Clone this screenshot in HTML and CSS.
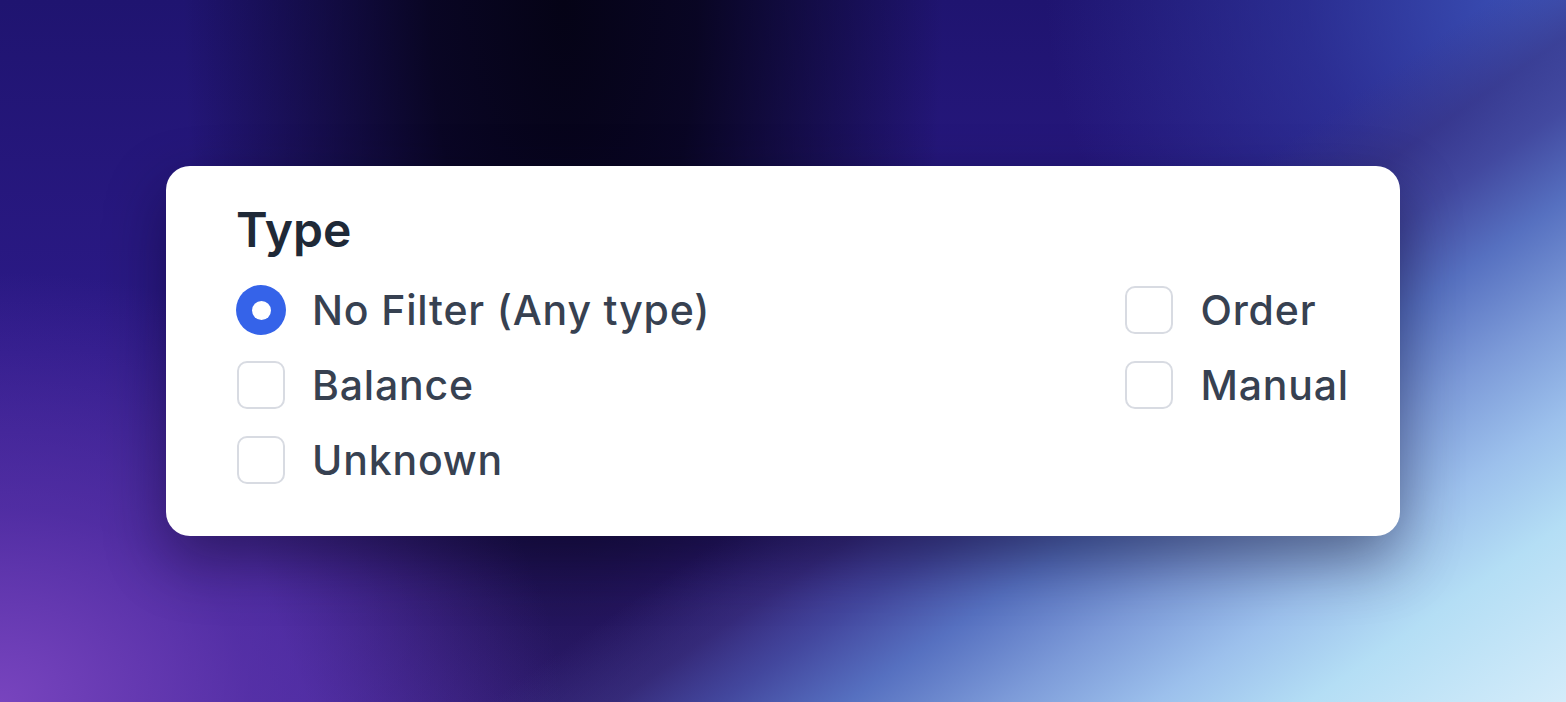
FILE: index.html
```html
<!DOCTYPE html>
<html lang="en">
<head>
<meta charset="utf-8">
<title>Type filter</title>
<link rel="stylesheet" href="styles.css">
</head>
<body>
<main class="stage">
  <section class="card">
    <h2 class="title">Type</h2>
    <div class="columns">
      <div class="col">
        <label class="option"><span class="radio checked"></span><span class="label">No Filter (Any type)</span></label>
        <label class="option"><span class="box"></span><span class="label">Balance</span></label>
        <label class="option"><span class="box"></span><span class="label">Unknown</span></label>
      </div>
      <div class="col">
        <label class="option"><span class="box"></span><span class="label">Order</span></label>
        <label class="option"><span class="box"></span><span class="label">Manual</span></label>
      </div>
    </div>
  </section>
</main>
</body>
</html>
```

FILE: styles.css
```css
* { box-sizing: border-box; }
html, body { margin: 0; padding: 0; }
body {
  width: 1566px;
  height: 702px;
  overflow: hidden;
  font-family: Inter, "Noto Sans", "Liberation Sans", sans-serif;
}
.stage {
  width: 100%;
  height: 100%;
  display: flex;
  align-items: center;
  justify-content: center;
  background:
    linear-gradient(145deg, rgba(50,45,120,0) 58%, rgba(60,55,130,0.55) 63%, rgba(68,75,160,0.9) 67%, #5670c0 72%, #7c9ad8 78%, #9cc0ec 84%, #b4def5 90%, #d4ecfa 100%),
    radial-gradient(ellipse 520px 440px at 100% 0%, rgba(64,92,195,0.9) 0%, rgba(52,66,172,0.55) 50%, rgba(40,40,150,0) 100%),
    radial-gradient(ellipse 560px 430px at 0% 100%, rgba(120,68,190,1) 0%, rgba(98,54,175,0.6) 45%, rgba(80,40,160,0) 100%),
    radial-gradient(ellipse 380px 950px at 36% 0%, rgba(5,3,22,1) 0%, rgba(5,3,22,0.85) 35%, rgba(5,3,22,0) 100%),
    linear-gradient(180deg, #1f1470 0%, #2c1a88 50%, #42279a 100%);
}
.card {
  width: 1234px;
  background: #fff;
  border-radius: 24px;
  padding: 36px 51px 51px 70px;
  box-shadow: 0 24px 60px rgba(8, 4, 30, 0.45);
}
.title {
  margin: 0 0 27px;
  font-size: 48px;
  line-height: 56px;
  font-weight: 600;
  color: #1f2937;
}
.columns {
  display: flex;
  justify-content: space-between;
}
.col {
  display: flex;
  flex-direction: column;
  gap: 25px;
}
.option {
  display: flex;
  align-items: center;
  gap: 26px;
  height: 50px;
}
.label {
  font-size: 41px;
  line-height: 50px;
  font-weight: 500;
  letter-spacing: 0.02em;
  color: #374151;
}
.radio {
  width: 50px;
  height: 50px;
  border-radius: 50%;
  background: #3563e9;
  display: flex;
  align-items: center;
  justify-content: center;
  flex: none;
}
.radio::after {
  content: "";
  width: 19px;
  height: 19px;
  border-radius: 50%;
  background: #fff;
}
.box {
  width: 48px;
  height: 48px;
  margin: 0 1px;
  border: 2px solid #d8dbe2;
  border-radius: 10px;
  flex: none;
}
```
